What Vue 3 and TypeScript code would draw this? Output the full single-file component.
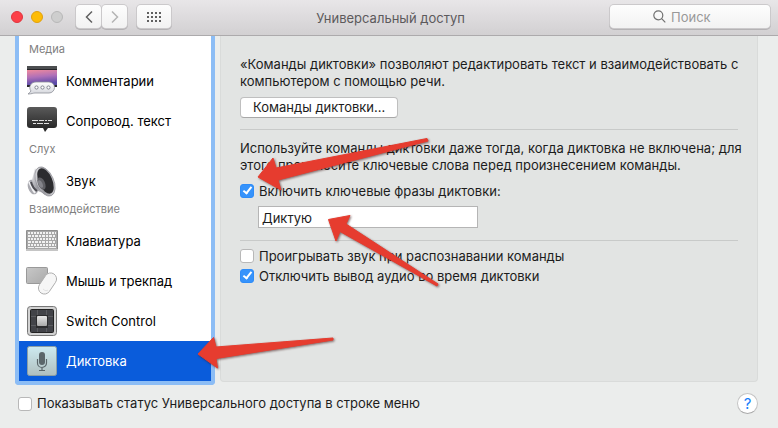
<script setup lang="ts">
import { ref } from 'vue'

type IconName = 'captions' | 'subtitles' | 'sound' | 'keyboard' | 'mouse' | 'switch' | 'dictation'
interface Item {
  id: IconName
  label: string
}
interface Group {
  title: string
  items: Item[]
}

const groups: Group[] = [
  {
    title: 'Медиа',
    items: [
      { id: 'captions', label: 'Комментарии' },
      { id: 'subtitles', label: 'Сопровод. текст' },
    ],
  },
  { title: 'Слух', items: [{ id: 'sound', label: 'Звук' }] },
  {
    title: 'Взаимодействие',
    items: [
      { id: 'keyboard', label: 'Клавиатура' },
      { id: 'mouse', label: 'Мышь и трекпад' },
      { id: 'switch', label: 'Switch Control' },
      { id: 'dictation', label: 'Диктовка' },
    ],
  },
]

const selected = ref<IconName>('dictation')
const search = ref('')
const phraseEnabled = ref(true)
const phrase = ref('Диктую')
const playSound = ref(false)
const muteAudio = ref(true)
const showStatus = ref(false)
</script>

<template>
  <div class="window">
    <header class="toolbar">
      <div class="toolbar-left">
        <div class="lights">
          <button class="light close" aria-label="Закрыть"></button>
          <button class="light minimize" aria-label="Свернуть"></button>
          <button class="light zoom" aria-label="Развернуть" disabled></button>
        </div>
        <div class="nav">
          <button class="tool" aria-label="Назад">
            <svg width="8" height="14" viewBox="0 0 8 14"><path d="M7 1.500 1.500 7 7 12.500" fill="none" stroke="#606060" stroke-width="1.500" /></svg>
          </button>
          <button class="tool" aria-label="Вперёд" disabled>
            <svg width="8" height="14" viewBox="0 0 8 14"><path d="M1 1.500 6.500 7 1 12.500" fill="none" stroke="#b4b4b4" stroke-width="1.500" /></svg>
          </button>
        </div>
        <button class="tool all" aria-label="Показать все">
          <svg width="14" height="10" viewBox="0 0 14 10" fill="#606060">
            <template v-for="r in 3" :key="r">
              <rect v-for="c in 4" :key="c" :x="(c - 1) * 4" :y="(r - 1) * 4" width="2" height="2" />
            </template>
          </svg>
        </button>
      </div>
      <h1 class="title">Универсальный доступ</h1>
      <label class="search">
        <svg width="13" height="13" viewBox="0 0 13 13" fill="none" stroke="#707070" stroke-width="1.200">
          <circle cx="5.300" cy="5.300" r="4.500" />
          <path d="m8.600 8.600 3.700 3.700" />
        </svg>
        <input v-model="search" type="text" placeholder="Поиск" aria-label="Поиск" />
      </label>
    </header>

    <main class="body">
      <nav class="sidebar">
        <section v-for="group in groups" :key="group.title">
          <h2 class="group-title">{{ group.title }}</h2>
          <button
            v-for="item in group.items"
            :key="item.id"
            class="item"
            :class="{ active: item.id === selected }"
            @click="selected = item.id"
          >
            <svg v-if="item.id === 'captions'" class="icon" viewBox="0 0 32 32">
              <defs>
                <linearGradient id="sunset" x2="0.200" y2="1">
                  <stop offset="0" stop-color="#f08a9c" />
                  <stop offset="0.500" stop-color="#b070b8" />
                  <stop offset="1" stop-color="#5a4aa8" />
                </linearGradient>
                <linearGradient id="bubble" x2="0" y2="1">
                  <stop offset="0" stop-color="#fff" />
                  <stop offset="1" stop-color="#d4d6dc" />
                </linearGradient>
              </defs>
              <path d="M1 1h30v21H1z" fill="#26262a" />
              <path d="M1 1h30v3H1z" fill="#4c4e50" />
              <path d="M1 5h30v15H1z" fill="url(#sunset)" />
              <path d="M10 17h13a5.500 5.500 0 0 1 0 11H9c-2 0-3 1-7 1 1.500-1 2-2 3-3C2 22 5 17 10 17Z" fill="url(#bubble)" stroke="#8d8f98" stroke-width="0.800" />
              <g fill="#fff" stroke="#777b88" stroke-width="0.900">
                <circle cx="10.500" cy="22.500" r="1.600" />
                <circle cx="16.500" cy="22.500" r="1.600" />
                <circle cx="22.500" cy="22.500" r="1.600" />
              </g>
            </svg>
            <svg v-else-if="item.id === 'subtitles'" class="icon" viewBox="0 0 32 32">
              <defs>
                <linearGradient id="dark" x2="0" y2="1">
                  <stop offset="0" stop-color="#5a5a5a" />
                  <stop offset="1" stop-color="#202020" />
                </linearGradient>
              </defs>
              <path d="M4 2h24a3 3 0 0 1 3 3v15a3 3 0 0 1-3 3h-6l-3 4-2-4H4a3 3 0 0 1-3-3V5a3 3 0 0 1 3-3Z" fill="url(#dark)" />
              <path d="M6 15.500h6m1 0h5m1 0h2m1 0h4M7 18.500h3m1 0h6m1 0h5" stroke="#e2e2e2" />
            </svg>
            <svg v-else-if="item.id === 'sound'" class="icon" viewBox="0 0 32 32">
              <defs>
                <linearGradient id="metal" x2="1" y2="1">
                  <stop offset="0" stop-color="#f4f4f6" />
                  <stop offset="0.500" stop-color="#9a9aa0" />
                  <stop offset="1" stop-color="#e8e8ea" />
                </linearGradient>
              </defs>
              <ellipse cx="7" cy="22" rx="5" ry="7.500" transform="rotate(-18 7 22)" fill="#aaaab0" />
              <path d="M3 17c2 3 3 7 6 11" fill="none" stroke="#f2f2f4" stroke-width="2" />
              <path d="M9 3 6 15c1 4 3 8 6 11l12 5Z" fill="url(#metal)" />
              <path d="M5 17c1 4 3 7 6 9" fill="none" stroke="#4c4c52" stroke-width="2" />
              <ellipse cx="19" cy="16.500" rx="8.700" ry="15.500" transform="rotate(-24 19 16.500)" fill="url(#metal)" stroke="#898990" stroke-width="0.600" />
              <ellipse cx="19.500" cy="16" rx="6.800" ry="13.500" transform="rotate(-24 19.500 16)" fill="#2c2c2f" />
              <ellipse cx="15.500" cy="18.500" rx="3.500" ry="6.500" transform="rotate(-24 15.500 18.500)" fill="#606065" />
              <ellipse cx="14.500" cy="19" rx="2" ry="4" transform="rotate(-24 14.500 19)" fill="#84848a" />
            </svg>
            <svg v-else-if="item.id === 'keyboard'" class="icon" viewBox="0 0 32 32">
              <rect y="5" width="32" height="21" rx="1" fill="#8f8f8f" />
              <rect x="1" y="6" width="30" height="18" fill="#a8a8a8" />
              <rect y="24" width="32" height="2" fill="#c5c5c5" />
              <g stroke="#f2f2f2" stroke-width="2">
                <path d="M2 8h28" stroke-dasharray="2 1" />
                <path d="M2 11h28" stroke-dasharray="3 1 2 1" />
                <path d="M2 14h28" stroke-dasharray="2 1" />
                <path d="M2 17h28" stroke-dasharray="3 1 2 1" />
                <path d="M2 20h28" stroke-dasharray="2 1" />
                <path d="M2 22.500h6m1 0h13m1 0h7" stroke-width="1" />
              </g>
            </svg>
            <svg v-else-if="item.id === 'mouse'" class="icon" viewBox="0 0 32 32">
              <defs>
                <linearGradient id="pad" x2="1" y2="1">
                  <stop offset="0" stop-color="#c8c8c8" />
                  <stop offset="1" stop-color="#a9a9a9" />
                </linearGradient>
              </defs>
              <rect x="0.500" y="2.500" width="21" height="16" rx="1" fill="url(#pad)" stroke="#999" />
              <rect x="15.500" y="7" width="12" height="23" rx="6" transform="rotate(34 21.500 18.500)" fill="#f6f6f6" stroke="#aeaeae" stroke-width="0.900" />
              <path d="M17 24c2 2 4 2 5 1" fill="none" stroke="#e2e2e2" />
            </svg>
            <svg v-else-if="item.id === 'switch'" class="icon" viewBox="0 0 32 32">
              <defs>
                <linearGradient id="key" x2="0" y2="1">
                  <stop offset="0" stop-color="#e6e6e6" />
                  <stop offset="1" stop-color="#a8a8a8" />
                </linearGradient>
              </defs>
              <rect x="1.500" y="1.500" width="29" height="29" rx="3" fill="#d2d2d2" stroke="#777" />
              <rect x="4.500" y="4.500" width="23" height="23" rx="1" fill="#424348" stroke="#222" />
              <path d="M11.500 5v22M20.500 5v22M5 11.500h22M5 20.500h22" stroke="#66676b" stroke-width="0.700" />
              <rect x="10" y="10" width="12" height="13" fill="#2c2c2e" />
              <rect x="11" y="11" width="10" height="10" rx="1" fill="url(#key)" />
            </svg>
            <svg v-else class="icon" viewBox="0 0 32 32">
              <defs>
                <linearGradient id="mic" x2="0" y2="1">
                  <stop offset="0" stop-color="#cdeaf0" />
                  <stop offset="1" stop-color="#b0bfbf" />
                </linearGradient>
              </defs>
              <rect x="1.500" y="1.500" width="29" height="29" rx="2" fill="url(#mic)" stroke="#8c9fa5" />
              <rect x="13" y="7" width="6" height="13" rx="3" fill="#5b666a" />
              <path d="M11.500 14v4a4.500 4.500 0 0 0 9 0v-4M16 22.500V25m-3 .5h6" fill="none" stroke="#5b666a" stroke-width="1.200" />
            </svg>
            <span>{{ item.label }}</span>
          </button>
        </section>
      </nav>

      <section class="panel">
        <p>«Команды диктовки» позволяют редактировать текст и взаимодействовать с<br />компьютером с помощью речи.</p>
        <button class="push">Команды диктовки...</button>
        <hr />
        <p>Используйте команды диктовки даже тогда, когда диктовка не включена; для<br />этого произнесите ключевые слова перед произнесением команды.</p>
        <label class="check phrase-check"><input v-model="phraseEnabled" type="checkbox" />Включить ключевые фразы диктовки:</label>
        <input v-model="phrase" class="phrase" type="text" aria-label="Ключевая фраза" />
        <hr />
        <div class="options">
          <label class="check"><input v-model="playSound" type="checkbox" />Проигрывать звук при распознавании команды</label>
          <label class="check"><input v-model="muteAudio" type="checkbox" />Отключить вывод аудио во время диктовки</label>
        </div>
      </section>
    </main>

    <footer class="footer">
      <label class="check"><input v-model="showStatus" type="checkbox" />Показывать статус Универсального доступа в строке меню</label>
      <button class="help" aria-label="Справка">?</button>
    </footer>

    <svg class="arrows" width="778" height="428" viewBox="0 0 778 428" aria-hidden="true">
      <g fill="#e63c2f" stroke="#e63c2f" stroke-width="1" stroke-linejoin="round">
        <path d="M258 177 273 158 276 168 427 138.500 428 141 278 180 281 190Z" />
        <path d="M328.500 219.500 350 215.500 346 224 438 284 437 286 340 231.500 336 241Z" />
        <path d="M198 354 213.500 337.500 216 347 333 338 333 340 216 358.500 217.500 368Z" />
      </g>
    </svg>
  </div>
</template>

<style>
body {
  margin: 0;
  background: #ebedec;
}
</style>

<style scoped>
.window {
  position: relative;
  display: flex;
  flex-direction: column;
  min-height: 100vh;
  overflow: hidden;
  box-sizing: border-box;
  background: #ebedec;
  color: #1c1c1c;
  font: 13px/17px Inter, "Noto Sans", sans-serif;
}
button,
input {
  font: inherit;
  color: inherit;
}
.toolbar {
  display: grid;
  grid-template-columns: 1fr auto 1fr;
  align-items: center;
  height: 36px;
  box-sizing: border-box;
  padding: 0 8px 2px 11px;
  background: linear-gradient(#e8e6e8, #d2d0d2);
  border-bottom: 1px solid #acaaac;
}
.toolbar-left,
.nav,
.lights {
  display: flex;
  align-items: center;
}
.toolbar-left {
  gap: 10px;
}
.lights {
  gap: 8px;
  margin-right: 3px;
}
.nav {
  gap: 1px;
}
.light {
  width: 12px;
  height: 12px;
  padding: 0;
  border: 1px solid #e0353f;
  border-radius: 50%;
  background: #fc4048;
}
.minimize {
  border-color: #e0a010;
  background: #fdbc06;
}
.zoom {
  border-color: #b8b8b8;
  background: #cecece;
}
.tool {
  display: flex;
  align-items: center;
  justify-content: center;
  width: 25px;
  height: 23px;
  padding: 0;
  border: 0;
  border-radius: 4px;
  background: linear-gradient(#fdfdfd, #f2f2f2);
  box-shadow: 0 0 0 1px #cbc9cb, 0 1px 0 1px #b4b2b4;
}
.all {
  width: 34px;
}
.title {
  margin: 0;
  padding-top: 4px;
  font-size: 13px;
  font-weight: 400;
  color: #5c5a5c;
}
.search {
  justify-self: end;
  display: flex;
  align-items: center;
  gap: 5px;
  width: 160px;
  height: 23px;
  padding-left: 43px;
  box-sizing: border-box;
  border-radius: 4px;
  background: linear-gradient(#fdfdfd, #f2f2f2);
  box-shadow: 0 0 0 1px #cbc9cb, 0 1px 0 1px #b4b2b4;
}
.search input {
  width: 80px;
  padding: 2px 0 0;
  border: 0;
  outline: 0;
  background: none;
}
.search input::placeholder {
  color: #999;
  opacity: 1;
}
.body {
  display: flex;
  gap: 5px;
  padding: 0 20px 0 15px;
}
.sidebar {
  width: 192px;
  flex: none;
  padding-top: 5px;
  border: 4px solid #8cbdf5;
  border-top: 0;
  border-radius: 0 0 4px 4px;
  background: #fff;
}
.group-title {
  margin: 0;
  padding: 0 10px 4px;
  font-size: 11px;
  font-weight: 400;
  line-height: 16px;
  color: #808080;
}
.item {
  display: flex;
  align-items: center;
  gap: 8px;
  width: 100%;
  height: 40px;
  padding: 0 7px;
  border: 0;
  background: none;
  color: #000;
  text-align: left;
}
.item.active {
  background: #0a5cdb;
  color: #fff;
}
.icon {
  width: 32px;
  height: 32px;
}
.panel {
  display: flex;
  flex-direction: column;
  align-items: flex-start;
  flex: 1;
  min-width: 0;
  margin-bottom: 3px;
  padding: 20px 19px;
  box-sizing: border-box;
  border: 1px solid #d9dbda;
  border-top: 0;
  border-radius: 0 0 4px 4px;
  background: #e2e4e3;
}
p {
  margin: 0;
  white-space: nowrap;
}
hr {
  align-self: stretch;
  height: 1px;
  margin: 11px 0 10px;
  border: 0;
  background: #c8cac9;
}
.push {
  height: 21px;
  margin-top: 7px;
  padding: 0 12px;
  border: 1px solid #bfbfbf;
  border-bottom-color: #a8a8a8;
  border-radius: 4px;
  background: #fff;
  line-height: 17px;
}
.check {
  display: flex;
  align-items: center;
  gap: 5px;
  height: 20px;
}
.check input {
  appearance: none;
  width: 14px;
  height: 14px;
  margin: 0;
  border: 1px solid #b8b8b8;
  border-radius: 3px;
  background: #fff;
}
.check input:checked {
  border-color: #2e8cf8;
  background: #3693fb;
}
.check input:checked::after {
  content: "";
  display: block;
  width: 3px;
  height: 7px;
  margin: 0 0 0 4px;
  border: solid #fff;
  border-width: 0 2px 2px 0;
  transform: rotate(38deg);
}
.phrase-check {
  margin-top: 7px;
}
.phrase {
  width: 220px;
  height: 22px;
  margin: 5px 0 1px 18px;
  padding: 2px 3px 0;
  box-sizing: border-box;
  border: 1px solid #b5b5b5;
  border-radius: 0;
  background: #fff;
  outline: 0;
}
.options {
  margin-top: -5px;
}
.footer {
  display: flex;
  align-items: center;
  justify-content: space-between;
  padding: 8px 20px 12px 18px;
}
.help {
  width: 21px;
  height: 21px;
  padding: 0;
  border: 1px solid #c4c4c4;
  border-bottom-color: #a9a9a9;
  border-radius: 50%;
  background: #fff;
  color: #157efb;
  font-size: 15px;
}
.arrows {
  position: absolute;
  top: 0;
  left: 0;
  pointer-events: none;
  filter: drop-shadow(1px 1px 1px rgba(60, 20, 20, 0.6));
}
</style>
